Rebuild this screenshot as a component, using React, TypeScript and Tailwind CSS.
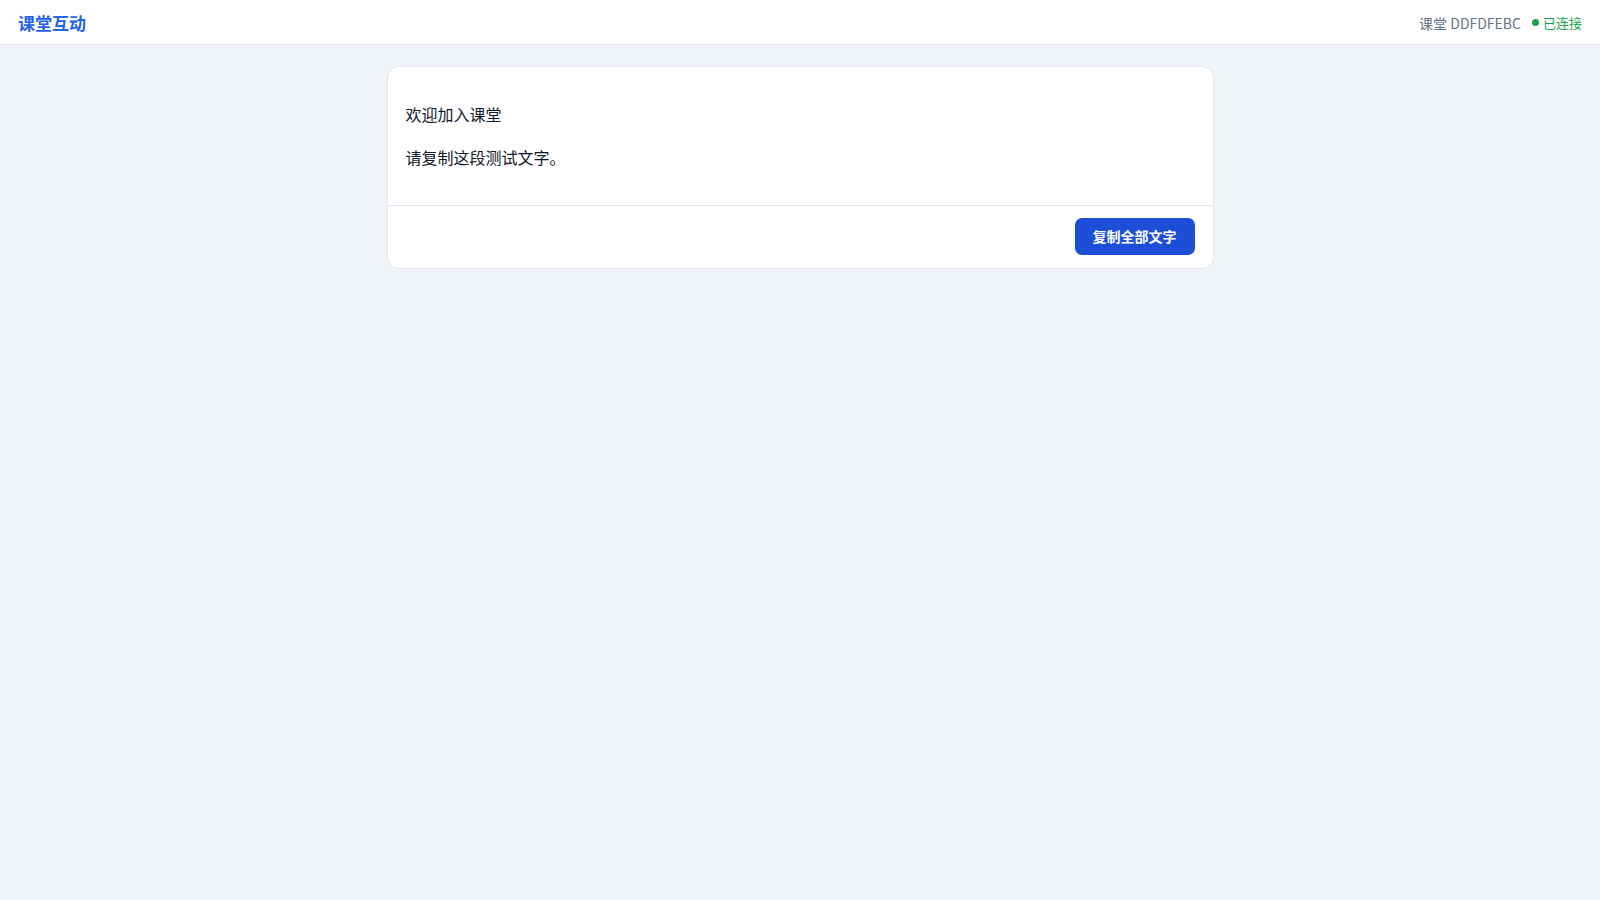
export default function App() {
  return (
    <div
      className="min-h-screen bg-[#f0f3f8] text-[#111827]"
      style={{ fontFamily: '"Noto Sans CJK SC", "Noto Sans", sans-serif' }}
    >
      <header className="flex h-[45px] items-center justify-between border-b border-[#e2e8f0] bg-white px-[18px] pt-[1px]">
        <h1 className="text-[17px] font-bold text-[#2563eb]">课堂互动</h1>
        <div className="flex items-center gap-[11px] pt-[1px] text-[14px]">
          <span className="text-[#64748b]">课堂 DDFDFEBC</span>
          <span className="flex items-center gap-[4px] text-[13px] text-[#16a34a]">
            <span className="h-[7px] w-[7px] -translate-y-[1px] rounded-full bg-[#16a34a]" />
            已连接
          </span>
        </div>
      </header>

      <main className="pt-[21px]">
        <div className="mx-auto w-[827px] overflow-hidden rounded-[12px] border border-[#e2e8f0] bg-white">
          <div className="px-[18px] pt-[18px] pb-[18px] text-[16px] leading-[27px]">
            <p className="my-4">欢迎加入课堂</p>
            <p className="my-4">请复制这段测试文字。</p>
          </div>
          <div className="flex justify-end border-t border-[#e2e8f0] px-[18px] pt-[12px] pb-[13px]">
            <button
              type="button"
              className="h-[37px] rounded-[7px] bg-[#1d4ed8] px-[18px] text-[14px] font-bold text-white"
            >
              复制全部文字
            </button>
          </div>
        </div>
      </main>
    </div>
  );
}
